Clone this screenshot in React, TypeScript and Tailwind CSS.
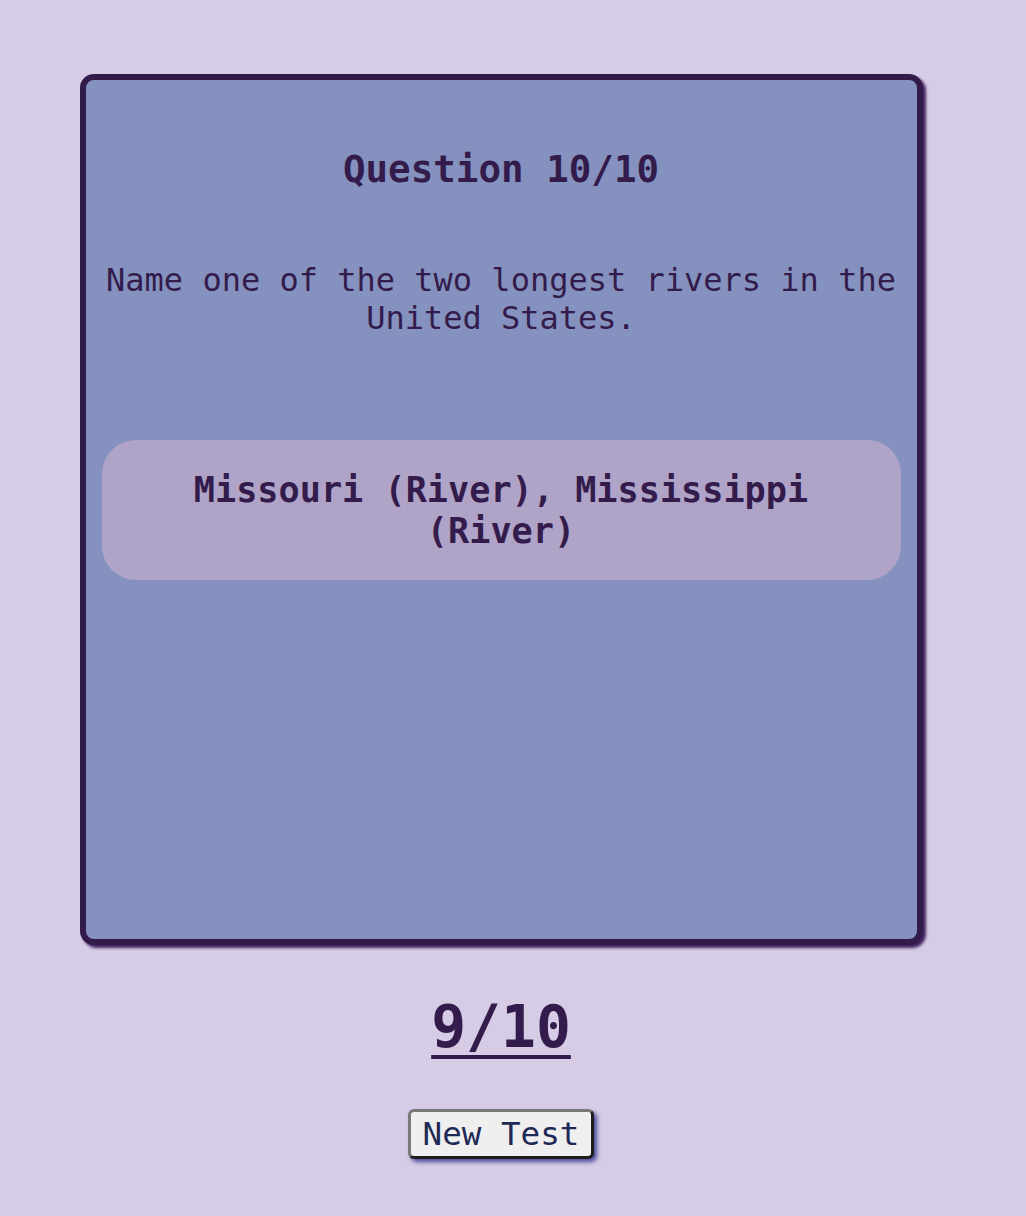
const mono = "font-['DejaVu_Sans_Mono','Liberation_Mono',monospace]";

const QuestionCard = () => (
    <div className="mx-auto flex h-[871px] w-[843px] flex-col items-center rounded-[14px] border-[6px] border-[#321b4a] bg-[#8591be] px-[16px] pt-[67px] shadow-[3px_3px_3px_#40215f]">
        <h2 className="text-[37.5px] font-bold leading-[44px] text-[#331c4b]">Question 10/10</h2>
        <p className="mt-[70px] text-center text-[32px] leading-[38px] text-[#331c4b]">
            Name one of the two longest rivers in the United States.
        </p>
        <div className="mt-[103px] flex h-[140px] w-full items-center justify-center rounded-[34px] bg-[#afa4c8] px-[80px]">
            <p className="text-center text-[35.2px] font-bold leading-[41px] text-[#331c4b]">
                Missouri (River), Mississippi (River)
            </p>
        </div>
    </div>
);

export default function App() {
    return (
        <div className={`min-h-[1216px] w-full bg-[#d6cce6] ${mono}`}>
            <div className="flex w-[1002px] flex-col items-center pt-[74px]">
                <QuestionCard />
                <div className="mt-[47px] text-[58px] font-bold leading-[70px] text-[#331c4b] underline decoration-[4px] underline-offset-[8px]">
                    9/10
                </div>
                <button className="mt-[47px] rounded-[6px] border-[3px] border-t-[#787878] border-l-[#787878] border-r-[#1e1e1e] border-b-[#1e1e1e] bg-[#efefef] px-[12px] py-[3px] text-[32.6px] leading-[38px] text-[#1e2a55] shadow-[3px_3px_4px_#4b4c9a]">
                    New Test
                </button>
            </div>
        </div>
    );
}
